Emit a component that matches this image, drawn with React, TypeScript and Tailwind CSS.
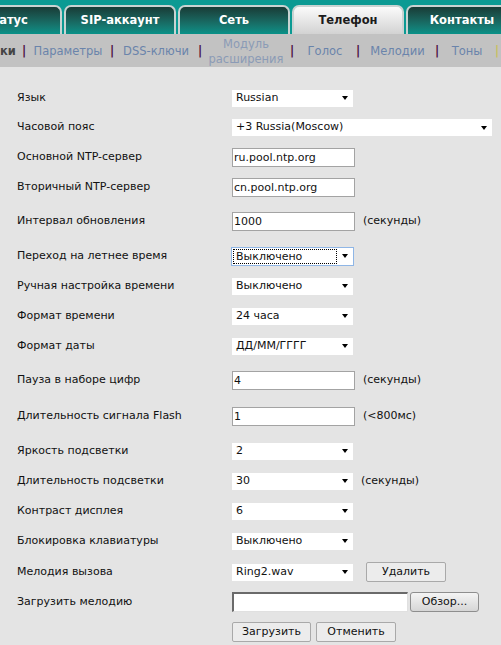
import React from 'react';

const font = { fontFamily: '"DejaVu Sans", Verdana, sans-serif' };

function Arrow() {
  return (
    <span className="w-0 h-0 border-l-[3px] border-r-[3px] border-t-[4px] border-l-transparent border-r-transparent border-t-black" />
  );
}

function Select({ value, wide, focused }: { value: string; wide?: boolean; focused?: boolean }) {
  return (
    <div
      className={
        'flex items-center justify-between bg-white h-[17px] pr-[5px] ' +
        (wide ? 'w-[260px] ' : 'w-[121px] ') +
        (focused ? 'outline outline-1 outline-[#8fb6e6] pl-[1px]' : 'pl-[4px]')
      }
    >
      <span className={focused ? 'border border-dotted border-black leading-[13px] pl-[2px] w-[104px]' : ''}>{value}</span>
      <Arrow />
    </div>
  );
}

function Input({ value }: { value: string }) {
  return (
    <div className="w-[123px] h-[19px] bg-white border border-[#a3a3a3] pl-[1px] leading-[17px]">{value}</div>
  );
}

function Btn({ children, w }: { children: React.ReactNode; w: string }) {
  return (
    <div className={'h-[20px] bg-[#ececec] border border-[#a9a9a9] rounded-[2px] flex items-center justify-center ' + w}>
      {children}
    </div>
  );
}

function Row({ label, h = 'h-[30px]', mt = '', children }: { label: string; h?: string; mt?: string; children: React.ReactNode }) {
  return (
    <div className={'flex items-center ' + h + ' ' + mt}>
      <div className="w-[232px] pl-[17px]">{label}</div>
      <div className="flex items-center">{children}</div>
    </div>
  );
}

const Unit = ({ t }: { t: string }) => <span className="ml-[8px]">{t}</span>;

const Sep = ({ light }: { light?: boolean }) => (
  <span className={'w-[8px] text-center font-bold ' + (light ? 'text-[#c9c060]' : 'text-[#4a0f42]')}>|</span>
);

export default function App() {
  const tabs = ['Статус', 'SIP-аккаунт', 'Сеть', 'Телефон', 'Контакты'];
  return (
    <div className="w-[501px] h-[645px] overflow-hidden bg-[#e4e4e4] text-[11px] text-[#111]" style={font}>
      <div className="h-[34px] bg-[#0b9a93] flex items-end gap-[2px] overflow-hidden">
        {tabs.map((t, i) => {
          const active = t === 'Телефон';
          return (
            <div
              key={t}
              className={
                'shrink-0 w-[112px] h-[29px] rounded-t-[7px] border-t-2 border-x-2 border-[#c9d3d2] flex items-center justify-center font-bold text-[11.5px] ' +
                (i === 0 ? 'ml-[-50px] ' : '') +
                (active
                  ? 'bg-gradient-to-b from-[#fbfbfb] to-[#d2d2d2] text-[#1c1c1c]'
                  : 'bg-gradient-to-b from-[#183c37] to-[#079188] text-white')
              }
            >
              {t}
            </div>
          );
        })}
      </div>
      <div className="h-[33px] pt-[2px] bg-[#c2c2c2] flex items-center text-[11.5px] text-[#6a84ab] whitespace-nowrap">
        <span className="w-[20px] font-bold text-[#454545]">ки</span>
        <Sep />
        <span className="w-[80px] text-center">Параметры</span>
        <Sep />
        <span className="w-[80px] text-center">DSS-ключи</span>
        <Sep />
        <span className="w-[84px] text-center leading-[15px] text-[#8b9bb6]">Модуль<br />расширения</span>
        <Sep />
        <span className="w-[58px] text-center">Голос</span>
        <Sep />
        <span className="w-[71px] text-center">Мелодии</span>
        <Sep />
        <span className="w-[52px] text-center">Тоны</span>
        <Sep light />
      </div>
      <div className="pt-[16px]">
        <Row label="Язык"><Select value="Russian" /></Row>
        <Row label="Часовой пояс" h="h-[29px]"><Select value="+3 Russia(Moscow)" wide /></Row>
        <Row label="Основной NTP-сервер"><Input value="ru.pool.ntp.org" /></Row>
        <Row label="Вторичный NTP-сервер"><Input value="cn.pool.ntp.org" /></Row>
        <Row label="Интервал обновления" mt="mt-[4px]"><Input value="1000" /><Unit t="(секунды)" /></Row>
        <Row label="Переход на летнее время" mt="mt-[5px]"><Select value="Выключено" focused /></Row>
        <Row label="Ручная настройка времени"><Select value="Выключено" /></Row>
        <Row label="Формат времени"><Select value="24 часа" /></Row>
        <Row label="Формат даты"><Select value="ДД/ММ/ГГГГ" /></Row>
        <Row label="Пауза в наборе цифр" mt="mt-[4px]"><Input value="4" /><Unit t="(секунды)" /></Row>
        <Row label="Длительность сигнала Flash" mt="mt-[6px]"><Input value="1" /><Unit t="(<800мс)" /></Row>
        <Row label="Яркость подсветки" mt="mt-[5px]"><Select value="2" /></Row>
        <Row label="Длительность подсветки"><Select value="30" /><Unit t="(секунды)" /></Row>
        <Row label="Контраст дисплея"><Select value="6" /></Row>
        <Row label="Блокировка клавиатуры"><Select value="Выключено" /></Row>
        <Row label="Мелодия вызова" mt="mt-[1px]">
          <Select value="Ring2.wav" />
          <div className="ml-[13px]"><Btn w="w-[80px]">Удалить</Btn></div>
        </Row>
        <Row label="Загрузить мелодию">
          <div className="w-[176px] h-[20px] bg-white border-t-2 border-l-2 border-[#6a6a6a] border-r border-b border-r-[#e0e0e0] border-b-[#e0e0e0]" />
          <div className="ml-[2px] h-[20px] w-[69px] rounded-[3px] border border-[#8e8e8e] bg-gradient-to-b from-[#f4f4f4] to-[#d6d6d6] flex items-center justify-center">Обзор...</div>
        </Row>
        <Row label="">
          <Btn w="w-[79px]">Загрузить</Btn>
          <div className="ml-[5px]"><Btn w="w-[80px]">Отменить</Btn></div>
        </Row>
      </div>
    </div>
  );
}
